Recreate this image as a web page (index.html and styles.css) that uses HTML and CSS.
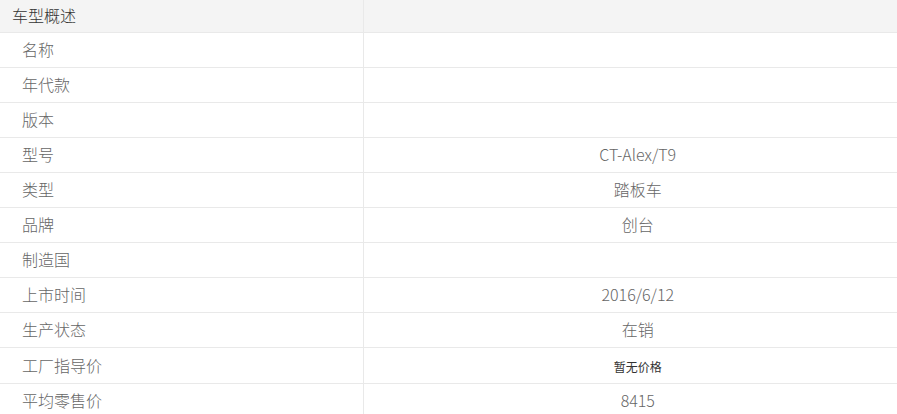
FILE: index.html
```html
<!DOCTYPE html>
<html lang="zh-CN">
<head>
<meta charset="utf-8">
<title>车型概述</title>
<link rel="stylesheet" href="styles.css">
</head>
<body>
<table class="spec">
  <tr class="head"><th class="label">车型概述</th><th class="value"></th></tr>
  <tr><td class="label">名称</td><td class="value"></td></tr>
  <tr><td class="label">年代款</td><td class="value"></td></tr>
  <tr><td class="label">版本</td><td class="value"></td></tr>
  <tr><td class="label">型号</td><td class="value">CT-Alex/T9</td></tr>
  <tr><td class="label">类型</td><td class="value">踏板车</td></tr>
  <tr><td class="label">品牌</td><td class="value">创台</td></tr>
  <tr><td class="label">制造国</td><td class="value"></td></tr>
  <tr><td class="label">上市时间</td><td class="value">2016/6/12</td></tr>
  <tr><td class="label">生产状态</td><td class="value">在销</td></tr>
  <tr class="tall"><td class="label">工厂指导价</td><td class="value"><span class="small">暂无价格</span></td></tr>
  <tr><td class="label">平均零售价</td><td class="value">8415</td></tr>
</table>
</body>
</html>
```
FILE: styles.css
```css
html, body {
  margin: 0;
  padding: 0;
  overflow: hidden;
  background: #fff;
}
.spec {
  width: 912px;
  border-collapse: collapse;
  font-family: "Microsoft YaHei", "Noto Sans CJK SC", sans-serif;
  font-size: 16px;
  font-weight: 300;
  color: #666;
}
.spec td, .spec th {
  height: 32px;
  padding: 0 0 2px 0;
  border-bottom: 1px solid #e9e9e9;
  font-weight: 300;
  vertical-align: middle;
}
.spec .label {
  width: 363px;
  text-align: left;
  padding-left: 22px;
  box-sizing: border-box;
  border-right: 1px solid #e9e9e9;
}
.spec .value {
  text-align: center;
}
.spec .head th {
  height: 30px;
  background: #f4f4f4;
  color: #333;
}
.spec .head .label {
  padding-left: 12px;
}
.spec .tall td {
  height: 33px;
}
.small {
  font-size: 12px;
  font-weight: 400;
  color: #333;
}
```
